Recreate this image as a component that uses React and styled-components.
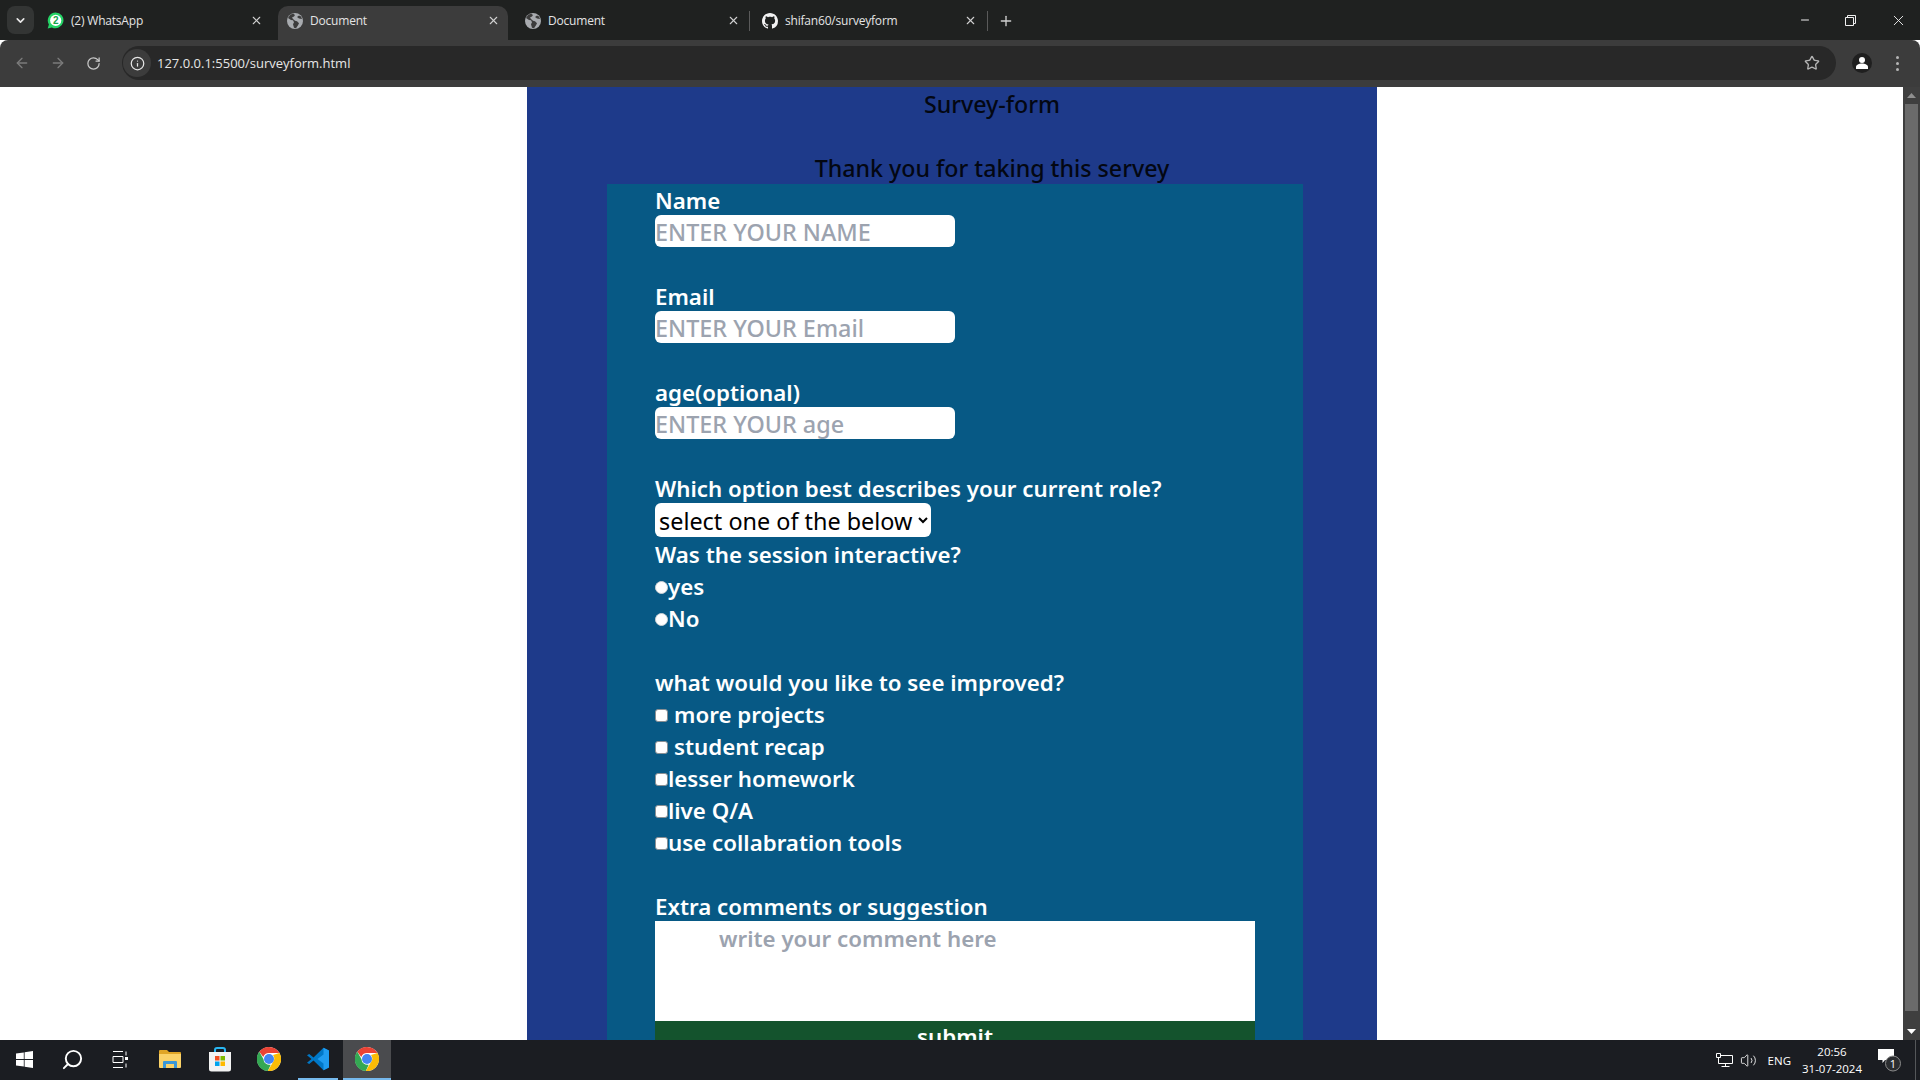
import styled, { createGlobalStyle } from "styled-components";
import { ArrowLeft, ArrowRight, RotateCw, Info, Star, X, Plus, ChevronDown, Minus, Search, Volume2 } from "lucide-react";

const GlobalStyle = createGlobalStyle`
  html, body {
    margin: 0;
    padding: 0;
    height: 100%;
    overflow: hidden;
    background: #fff;
  }
  * {
    box-sizing: border-box;
  }
`;

const Screen = styled.div`
  width: 1920px;
  height: 1080px;
  display: flex;
  flex-direction: column;
  overflow: hidden;
  font-family: "Noto Sans", "Open Sans", sans-serif;
`;

/* browser chrome */
const TabStrip = styled.div`
  height: 40px;
  flex: none;
  display: flex;
  align-items: flex-end;
  background: #1f2120;
  padding-left: 7px;
  color: #e4e4e4;
`;

const TabSearch = styled.div`
  width: 27px;
  height: 28px;
  margin-bottom: 6px;
  margin-right: 5px;
  border-radius: 8px;
  background: #333534;
  display: flex;
  align-items: center;
  justify-content: center;
`;

const Tab = styled.div`
  width: ${(p) => p.$width}px;
  height: 34px;
  flex: none;
  display: flex;
  align-items: center;
  padding: 0 ${(p) => p.$right}px 5px ${(p) => p.$left}px;
  gap: 7px;
  font-size: 12px;
  border-radius: 10px 10px 0 0;
  background: ${(p) => (p.$active ? "#3c3c3c" : "transparent")};
  position: relative;
  &::after {
    content: "";
    display: ${(p) => (p.$divider ? "block" : "none")};
    position: absolute;
    right: 0;
    top: 5px;
    width: 1px;
    height: 20px;
    background: #5a5a5a;
  }
`;

const TabTitle = styled.span`
  flex: 1;
  white-space: nowrap;
  font-family: "Open Sans", sans-serif;
  letter-spacing: -0.2px;
`;

const NewTab = styled.div`
  margin-left: 10px;
  height: 34px;
  display: flex;
  align-items: center;
  padding-bottom: 5px;
`;

const WindowControls = styled.div`
  margin-left: auto;
  align-self: stretch;
  display: flex;
  align-items: center;
  gap: 34px;
  padding-right: 13px;
`;

const Toolbar = styled.div`
  height: 47px;
  flex: none;
  display: flex;
  align-items: center;
  background: #3c3c3c;
  border-radius: 8px 8px 0 0;
  padding: 0 0 1px 14px;
`;

const NavButton = styled.div`
  width: 36px;
  display: flex;
  color: ${(p) => (p.$dim ? "#7b7b7b" : "#c8c8c8")};
`;

const AddressBar = styled.div`
  width: 1714px;
  height: 34px;
  border-radius: 17px;
  background: #282828;
  display: flex;
  align-items: center;
  padding: 0 16px 0 1px;
  color: #e6e6e6;
  font-size: 13px;
`;

const SiteInfo = styled.div`
  width: 28px;
  height: 28px;
  border-radius: 50%;
  background: #3c3c3c;
  display: flex;
  align-items: center;
  justify-content: center;
  margin-right: 6px;
  flex: none;
`;

const Url = styled.span`
  flex: 1;
  font-family: "Open Sans", sans-serif;
`;

const Avatar = styled.div`
  width: 20px;
  height: 20px;
  border-radius: 50%;
  background: #1f1f1f;
  margin-left: 16px;
  display: flex;
  align-items: center;
  justify-content: center;
`;

const MenuDots = styled.div`
  margin-left: 24px;
  display: flex;
  flex-direction: column;
  gap: 3px;
`;

const MenuDot = styled.span`
  width: 3px;
  height: 3px;
  border-radius: 50%;
  background: #b5b5b5;
`;

/* page */
const Viewport = styled.div`
  flex: 1;
  min-height: 0;
  display: flex;
  overflow: hidden;
  background: #fff;
`;

const PageArea = styled.div`
  flex: 1;
  display: flex;
  justify-content: center;
`;

const Panel = styled.main`
  width: 850px;
  margin-left: 1px;
  height: 1400px;
  background: #1e3a8a;
  font-size: 23.2px;
  font-weight: 500;
  line-height: 32px;
  color: #030712;
`;

const Heading = styled.div`
  text-align: center;
  padding-left: 80px;
  padding-top: 1px;
  height: ${(p) => p.$height}px;
`;

const FormCard = styled.form`
  width: 696px;
  margin-left: 80px;
  padding-left: 48px;
  height: 1300px;
  background: #075985;
  color: #fff;
  font-size: 22.3px;
  font-weight: 600;
`;

const Label = styled.label`
  display: block;
  height: 32px;
  padding-top: 1px;
`;

const Gap = styled.div`
  height: ${(p) => p.$size}px;
`;

const TextInput = styled.input`
  display: block;
  width: 300px;
  height: 32px;
  margin-top: -1px;
  padding: 1px 0 0;
  border: none;
  border-radius: 6px;
  background: #fff;
  font: inherit;
  font-size: 23.4px;
  font-weight: 500;
  &::placeholder {
    color: #9ca3af;
  }
`;

const RoleSelect = styled.select`
  display: block;
  width: 276px;
  height: 34px;
  margin: -1px 0 1px;
  padding: 1px 0 0;
  border: none;
  border-radius: 6px;
  background: #fff;
  color: #000;
  font: inherit;
  font-size: 23.4px;
  font-weight: 400;
`;

const OptionRow = styled.label`
  height: 32px;
  padding-top: 2px;
  display: flex;
  align-items: center;
`;

const Mark = styled.input`
  appearance: none;
  width: 13px;
  height: 13px;
  margin: 1px ${(p) => (p.$spaced ? "6px" : "0")} 0 0;
  background: #fff;
  border: 1px solid ${(p) => (p.type === "radio" ? "#cfd3d6" : "#8a8f93")};
  border-radius: ${(p) => (p.type === "radio" ? "50%" : "3px")};
  flex: none;
`;

const CommentBox = styled.textarea`
  display: block;
  width: 600px;
  height: 100px;
  margin-top: -1px;
  padding: 2px 0 0 64px;
  border: none;
  background: #fff;
  resize: none;
  font: inherit;
  &::placeholder {
    color: #9ca3af;
  }
`;

const SubmitButton = styled.button`
  display: block;
  width: 600px;
  height: 32px;
  padding: 0;
  border: none;
  background: #14532d;
  color: #fff;
  font: inherit;
  text-align: center;
`;

/* scrollbar */
const ScrollTrack = styled.div`
  width: 17px;
  flex: none;
  background: #3f3f3f;
  display: flex;
  flex-direction: column;
  align-items: center;
`;

const ScrollArrow = styled.div`
  height: 17px;
  flex: none;
  display: flex;
  align-items: center;
  justify-content: center;
  margin-top: ${(p) => (p.$end ? "auto" : "0")};
`;

const ScrollThumb = styled.div`
  width: 13px;
  height: 907px;
  flex: none;
  background: #6b6b6b;
`;

/* taskbar */
const Taskbar = styled.footer`
  height: 40px;
  flex: none;
  display: flex;
  align-items: stretch;
  background: #1b1d22;
  color: #fff;
`;

const TaskIcon = styled.div`
  width: ${(p) => p.$width}px;
  margin-left: ${(p) => p.$gap || 0}px;
  flex: none;
  display: flex;
  align-items: center;
  justify-content: center;
  background: ${(p) => (p.$active ? "#4a4b4e" : "transparent")};
  border-bottom: 2px solid ${(p) => (p.$open ? "#76b9ed" : "transparent")};
`;

const Tray = styled.div`
  margin-left: auto;
  display: flex;
  align-items: center;
`;

const TrayText = styled.span`
  font-family: "Open Sans", sans-serif;
  font-size: 11.5px;
  margin-left: 2px;
`;

const Clock = styled.div`
  width: 70px;
  margin: 0 11px 0 6px;
  text-align: center;
  font-family: "Open Sans", sans-serif;
  font-size: 11.5px;
  line-height: 17px;
`;

const ShowDesktop = styled.div`
  width: 5px;
  margin-left: 13px;
  align-self: stretch;
  border-left: 1px solid #55575a;
`;

const Globe = () => (
  <svg width="16" height="16" viewBox="0 0 16 16">
    <circle cx="8" cy="8" r="8" fill="#a8abaf" />
    <path d="M6 .6 3 2 1 5l3 2 2 .2 1 2-1 2 1 3.5 2 .5 2-3 1-2-2-2-2-.5L6 6 5 4.5l2-1 1-1.5Zm6 2-2 1.5 2 1.5 3 .5-1-2.5Z" fill="#3c3c3c" />
  </svg>
);

const WhatsAppIcon = () => (
  <svg width="17" height="17" viewBox="0 0 17 17">
    <path d="M8.7.5a7.9 7.9 0 0 0-6.800 11.900L.7 16.500l4.200-1.100A7.900 7.900 0 1 0 8.700.5Z" fill="#25d366" />
    <circle cx="8.700" cy="8.400" r="5.600" fill="#fff" />
    <text x="8.700" y="12" textAnchor="middle" fontSize="10" fontWeight="700" fontFamily="Liberation Sans" fill="#16a34a">2</text>
  </svg>
);

const GithubIcon = () => (
  <svg width="16" height="16" viewBox="0 0 16 16">
    <path
      fill="#f2f2f2"
      d="M8 0C3.58 0 0 3.58 0 8c0 3.54 2.29 6.53 5.47 7.59.4.07.55-.17.55-.38 0-.19-.01-.82-.01-1.49-2.01.37-2.53-.49-2.69-.94-.09-.23-.48-.94-.82-1.13-.28-.15-.68-.52-.01-.53.63-.01 1.08.58 1.23.82.72 1.21 1.87.87 2.33.66.07-.52.28-.87.51-1.07-1.78-.2-3.64-.89-3.64-3.95 0-.87.31-1.59.82-2.15-.08-.2-.36-1.02.08-2.12 0 0 .67-.21 2.2.82.64-.18 1.32-.27 2-.27s1.36.09 2 .27c1.53-1.04 2.2-.82 2.2-.82.44 1.1.16 1.92.08 2.12.51.56.82 1.27.82 2.15 0 3.07-1.87 3.75-3.65 3.95.29.25.54.73.54 1.48 0 1.07-.01 1.93-.01 2.2 0 .21.15.46.55.38A8.01 8.01 0 0 0 16 8c0-4.42-3.58-8-8-8Z"
    />
  </svg>
);

const RestoreIcon = () => (
  <svg width="11" height="11" viewBox="0 0 11 11" fill="none" stroke="#f0f0f0">
    <path d="M.5 2.500h8v8h-8z" />
    <path d="M2.500 2.500v-2h8v8h-2" />
  </svg>
);

const UserGlyph = () => (
  <svg width="14" height="14" viewBox="0 0 14 14" fill="#fff">
    <circle cx="7" cy="4" r="3" />
    <path d="M1 13v-2c0-2 3-3.500 6-3.500s6 1.500 6 3.500v2z" />
  </svg>
);

const WindowsLogo = () => (
  <svg width="17" height="17" viewBox="0 0 17 17" fill="#fff">
    <path d="M0 2.500 7.800 1.400v6.700H0zM8.600 1.300 17 0v8.100H8.600zM0 8.900h7.800v6.700L0 14.500zM8.600 8.900H17V17l-8.400-1.300z" />
  </svg>
);

const TaskViewIcon = () => (
  <svg width="17" height="17" viewBox="0 0 17 17" fill="none" stroke="#fff">
    <path d="M1 .5h10M1 16.500h10M1 5.500h10v6H1zM14 .5v4M14 12.500v4" />
    <rect x="13" y="6" width="3" height="3" fill="#fff" stroke="none" />
  </svg>
);

const FolderIcon = () => (
  <svg width="22" height="20" viewBox="0 0 22 20">
    <path d="M0 2a1 1 0 0 1 1-1h7l2 2h11a1 1 0 0 1 1 1v3H0z" fill="#e0a526" />
    <path d="M0 5h22v13a1 1 0 0 1-1 1H1a1 1 0 0 1-1-1z" fill="#fbd268" />
    <path d="M4 19v-6a1 1 0 0 1 1-1h12a1 1 0 0 1 1 1v6h-3v-4H7v4z" fill="#3b98d8" />
  </svg>
);

const StoreIcon = () => (
  <svg width="24" height="25" viewBox="0 0 24 25">
    <path d="M7 6V3a2 2 0 0 1 2-2h6a2 2 0 0 1 2 2v3" fill="none" stroke="#29b6f2" strokeWidth="2" />
    <path d="M1 5h22v17a2.500 2.500 0 0 1-2.500 2.500h-17A2.500 2.500 0 0 1 1 22z" fill="#f3f3f3" />
    <rect x="7" y="9" width="4.500" height="4.500" fill="#f25022" />
    <rect x="12.500" y="9" width="4.500" height="4.500" fill="#7fba00" />
    <rect x="7" y="14.500" width="4.500" height="4.500" fill="#00a4ef" />
    <rect x="12.500" y="14.500" width="4.500" height="4.500" fill="#ffb900" />
  </svg>
);

const ChromeIcon = () => (
  <svg width="24" height="24" viewBox="0 0 24 24">
    <circle cx="12" cy="12" r="12" fill="#fff" />
    <path d="M12 0a12 12 0 0 1 10.400 6H12a6 6 0 0 0-5.700 4L2.300 4.700A12 12 0 0 1 12 0Z" fill="#ea4335" />
    <path d="M2.300 4.700 6.400 12a6 6 0 0 0 7.300 5.700L10.800 24A12 12 0 0 1 2.300 4.700Z" fill="#34a853" />
    <path d="M22.400 6A12 12 0 0 1 10.800 24l4.900-8.500A6 6 0 0 0 16 8z" fill="#fbbc05" />
    <circle cx="12" cy="12" r="5" fill="#4285f4" />
  </svg>
);

const VsCodeIcon = () => (
  <svg width="24" height="24" viewBox="0 0 24 24">
    <path d="M17.500.8 23 3.400v17.200l-5.500 2.600L7.500 13.500 3.200 17 1 15.700 5.500 12 1 8.300 3.200 7l4.300 3.500z" fill="#0078c8" />
    <path d="M17.500.8 23 3.400v17.200l-5.500 2.600V16.500L11.500 12l6-4.500z" fill="#1f9cf0" />
  </svg>
);

const NetworkIcon = () => (
  <svg width="17" height="16" viewBox="0 0 17 16" fill="none" stroke="#fff">
    <path d="M.5 1.500h4v4h-4zM4.500 3.500h12v8h-14v-6M9.500 11.500v3M5.500 14.500h8M2.500 5.500v3" />
  </svg>
);

const NotificationIcon = () => (
  <svg width="24" height="24" viewBox="0 0 24 24">
    <path d="M0 1h16v11H7l-2.500 3v-3H0z" fill="#fff" />
    <circle cx="15" cy="15.500" r="7.500" fill="#2b2d30" stroke="#8b8b8b" />
    <text x="15" y="19.500" textAnchor="middle" fontSize="11" fontFamily="Open Sans" fill="#fff">1</text>
  </svg>
);

const improvements = [
  { text: "more projects", spaced: true },
  { text: "student recap", spaced: true },
  { text: "lesser homework" },
  { text: "live Q/A" },
  { text: "use collabration tools" },
];

const App = () => {
  return (
    <Screen>
      <GlobalStyle />
      <TabStrip>
        <TabSearch>
          <ChevronDown size={13} color="#e8e8e8" strokeWidth={3} />
        </TabSearch>
        <Tab $width={239} $left={8} $right={15}>
          <WhatsAppIcon />
          <TabTitle>(2) WhatsApp</TabTitle>
          <X size={13} color="#d0d0d0" />
        </Tab>
        <Tab $width={230} $left={9} $right={8} $active>
          <Globe />
          <TabTitle>Document</TabTitle>
          <X size={13} color="#d0d0d0" />
        </Tab>
        <Tab $width={242} $left={17} $right={10} $divider>
          <Globe />
          <TabTitle>Document</TabTitle>
          <X size={13} color="#d0d0d0" />
        </Tab>
        <Tab $width={238} $left={12} $right={11} $divider>
          <GithubIcon />
          <TabTitle>shifan60/surveyform</TabTitle>
          <X size={13} color="#d0d0d0" />
        </Tab>
        <NewTab>
          <Plus size={16} color="#d0d0d0" />
        </NewTab>
        <WindowControls>
          <Minus size={12} color="#f0f0f0" />
          <RestoreIcon />
          <X size={17} color="#f0f0f0" strokeWidth={1.3} />
        </WindowControls>
      </TabStrip>
      <Toolbar>
        <NavButton $dim>
          <ArrowLeft size={16} />
        </NavButton>
        <NavButton $dim>
          <ArrowRight size={16} />
        </NavButton>
        <NavButton>
          <RotateCw size={15} />
        </NavButton>
        <AddressBar>
          <SiteInfo>
            <Info size={15} color="#e6e6e6" />
          </SiteInfo>
          <Url>127.0.0.1:5500/surveyform.html</Url>
          <Star size={16} color="#b5b5b5" />
        </AddressBar>
        <Avatar>
          <UserGlyph />
        </Avatar>
        <MenuDots>
          <MenuDot />
          <MenuDot />
          <MenuDot />
        </MenuDots>
      </Toolbar>
      <Viewport>
        <PageArea>
          <Panel>
            <Heading $height={64}>Survey-form</Heading>
            <Heading $height={33}>Thank you for taking this servey</Heading>
            <FormCard>
              <Label>Name</Label>
              <TextInput placeholder="ENTER YOUR NAME" />
              <Gap $size={33} />
              <Label>Email</Label>
              <TextInput placeholder="ENTER YOUR Email" />
              <Gap $size={33} />
              <Label>age(optional)</Label>
              <TextInput placeholder="ENTER YOUR age" />
              <Gap $size={33} />
              <Label>Which option best describes your current role?</Label>
              <RoleSelect defaultValue="none">
                <option value="none">select one of the below</option>
              </RoleSelect>
              <Label>Was the session interactive?</Label>
              <OptionRow>
                <Mark type="radio" name="interactive" />
                yes
              </OptionRow>
              <OptionRow>
                <Mark type="radio" name="interactive" />
                No
              </OptionRow>
              <Gap $size={32} />
              <Label>what would you like to see improved?</Label>
              {improvements.map((item) => (
                <OptionRow key={item.text}>
                  <Mark type="checkbox" $spaced={item.spaced} />
                  {item.text}
                </OptionRow>
              ))}
              <Gap $size={32} />
              <Label>Extra comments or suggestion</Label>
              <CommentBox placeholder="write your comment here" />
              <SubmitButton type="button">submit</SubmitButton>
            </FormCard>
          </Panel>
        </PageArea>
        <ScrollTrack>
          <ScrollArrow>
            <svg width="9" height="5" viewBox="0 0 9 5"><path d="M4.500 0 9 5H0z" fill="#8f8f8f" /></svg>
          </ScrollArrow>
          <ScrollThumb />
          <ScrollArrow $end>
            <svg width="9" height="5" viewBox="0 0 9 5"><path d="M4.500 5 9 0H0z" fill="#fff" /></svg>
          </ScrollArrow>
        </ScrollTrack>
      </Viewport>
      <Taskbar>
        <TaskIcon $width={48}><WindowsLogo /></TaskIcon>
        <TaskIcon $width={48}><Search size={23} color="#fff" style={{ transform: "scaleX(-1)" }} /></TaskIcon>
        <TaskIcon $width={48}><TaskViewIcon /></TaskIcon>
        <TaskIcon $width={51}><FolderIcon /></TaskIcon>
        <TaskIcon $width={50}><StoreIcon /></TaskIcon>
        <TaskIcon $width={48}><ChromeIcon /></TaskIcon>
        <TaskIcon $width={40} $open $gap={5}><VsCodeIcon /></TaskIcon>
        <TaskIcon $width={48} $active $open $gap={5}><ChromeIcon /></TaskIcon>
        <Tray>
          <NetworkIcon />
          <Volume2 size={17} color="#fff" strokeWidth={1.2} style={{ margin: "0 9px 0 7px" }} />
          <TrayText>ENG</TrayText>
          <Clock>
            20:56
            <br />
            31-07-2024
          </Clock>
          <NotificationIcon />
          <ShowDesktop />
        </Tray>
      </Taskbar>
    </Screen>
  );
};

export default App;
